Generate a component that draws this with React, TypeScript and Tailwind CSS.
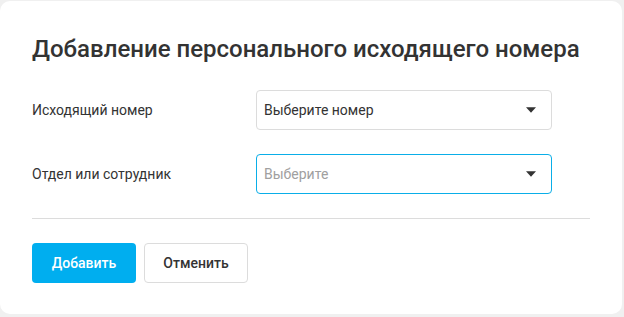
function Caret() {
  return (
    <svg width="10" height="6" viewBox="0 0 10 6" className="shrink-0">
      <path d="M0 0.3h10L5 5.8z" fill="#333333" />
    </svg>
  );
}

function SelectBox({ value, placeholder, focused }: { value?: string; placeholder: string; focused?: boolean }) {
  return (
    <div
      className={
        "flex h-10 w-[296px] items-center justify-between rounded-[4px] border bg-white pl-[7px] pr-[15px] " +
        (focused ? "border-[#0aaee8]" : "border-[#dcdcdc]")
      }
    >
      <span className={"text-[14px] " + (value ? "text-[#333333]" : "text-[#a0a0a0]")}>{value ?? placeholder}</span>
      <Caret />
    </div>
  );
}

function FieldRow({ label, children }: { label: string; children: React.ReactNode }) {
  return (
    <div className="flex items-center">
      <div className="w-[224px] text-[14px] text-[#333333]">{label}</div>
      {children}
    </div>
  );
}

export default function App() {
  return (
    <div
      className="h-[317px] w-[624px] bg-[#f0f0f0] pt-px pr-[2px] pb-[3px]"
      style={{ fontFamily: "Roboto, 'Noto Sans', sans-serif" }}
    >
      <div className="h-full rounded-[10px] bg-white px-8 pt-[34px]">
        <h1 className="text-[24px] leading-[28px] font-medium text-[#333333]">
          Добавление персонального исходящего номера
        </h1>
        <div className="mt-[27px] flex flex-col gap-6">
          <FieldRow label="Исходящий номер">
            <SelectBox value="Выберите номер" placeholder="Выберите номер" />
          </FieldRow>
          <FieldRow label="Отдел или сотрудник">
            <SelectBox placeholder="Выберите" focused />
          </FieldRow>
        </div>
        <div className="mt-6 border-t border-[#dcdcdc]" />
        <div className="mt-6 flex gap-2">
          <button className="h-10 w-[104px] rounded-[4px] bg-[#00aeef] text-[14px] font-medium text-white">
            Добавить
          </button>
          <button className="h-10 w-[104px] rounded-[4px] border border-[#dcdcdc] bg-white text-[14px] font-medium text-[#333333]">
            Отменить
          </button>
        </div>
      </div>
    </div>
  );
}
